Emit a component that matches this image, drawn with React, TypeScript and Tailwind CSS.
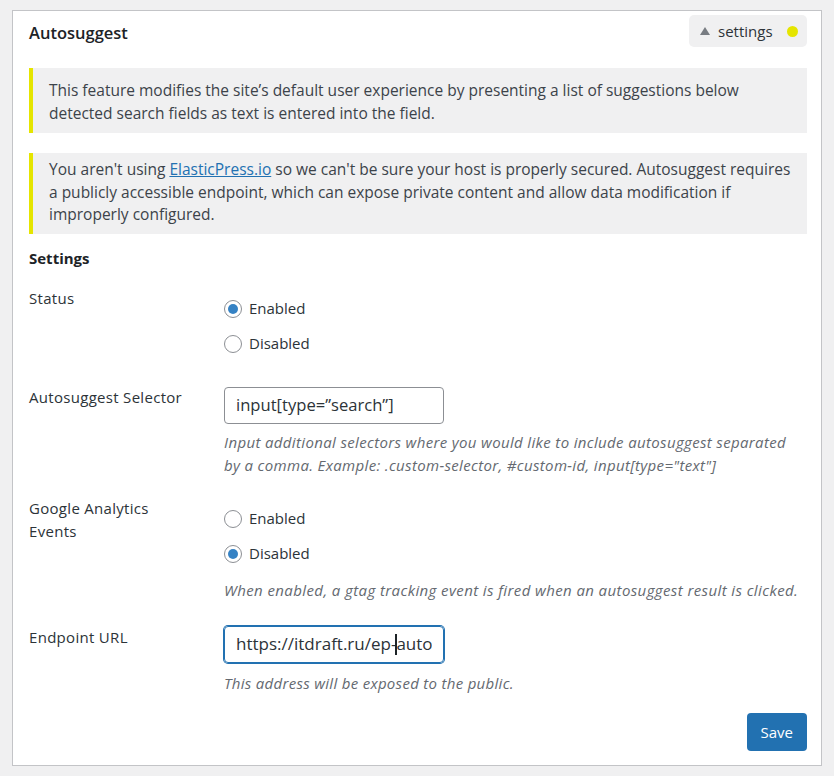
const font = '"Open Sans", "Noto Sans", sans-serif';

function Radio({ label, checked }: { label: string; checked?: boolean }) {
  return (
    <label className="flex items-center gap-[7px] h-[23px]">
      <span className="w-[18px] h-[18px] rounded-full border border-[#8c8f94] bg-white flex items-center justify-center">
        {checked && <span className="w-[10px] h-[10px] rounded-full bg-[#3582c4]"></span>}
      </span>
      <span className="text-[#2c3338]">{label}</span>
    </label>
  );
}

function Row({ label, children, className = '' }: { label: React.ReactNode; children: React.ReactNode; className?: string }) {
  return (
    <div className={`flex ${className}`}>
      <div className="w-[165px] mr-[30px] flex-shrink-0 text-[#2c3338] tracking-[0.3px]">{label}</div>
      <div className="flex-1 pr-[6px]">{children}</div>
    </div>
  );
}

export default function App() {
  return (
    <div
      className="min-h-screen bg-[#f0f0f1] pt-[10px] px-[12px] text-[15px] leading-[22.5px]"
      style={{ fontFamily: font }}
    >
      <div className="border border-[#c3c4c7] bg-white pt-[4px] pb-[14px] pl-4 pr-[14px]">
        {/* Header */}
        <div className="flex items-center justify-between h-[32px]">
          <h2 className="text-[16.5px] font-semibold text-[#1d2327] mt-[5px]">Autosuggest</h2>
          <button className="flex items-center h-[32px] w-[118px] pl-[11px] rounded-[5px] bg-[#f0f0f1] text-[#2c3338]">
            <svg width="10" height="8" viewBox="0 0 10 8" className="mr-[8px]">
              <path d="M5 0 L10 8 L0 8 Z" fill="#787c82" />
            </svg>
            <span className="text-[15px]">settings</span>
            <span className="ml-auto mr-[9px] w-[11px] h-[11px] rounded-full bg-[#e5e500]"></span>
          </button>
        </div>

        {/* Notices */}
        <div className="mt-[21px] bg-[#f0f0f1] border-l-4 border-[#e5e500] pl-4 pr-3 pt-[11px] pb-[9px] text-[#3c434a] text-[15.5px]">
          This feature modifies the site’s default user experience by presenting a list of suggestions below
          detected search fields as text is entered into the field.
        </div>
        <div className="mt-[20px] bg-[#f0f0f1] border-l-4 border-[#e5e500] pl-4 pr-3 pt-[5px] pb-[8px] text-[#3c434a] text-[15.5px]">
          You aren't using{' '}
          <a href="#" className="text-[#2271b1] underline">
            ElasticPress.io
          </a>{' '}
          so we can't be sure your host is properly secured. Autosuggest requires a publicly accessible endpoint,
          which can expose private content and allow data modification if improperly configured.
        </div>

        <h3 className="mt-[13px] font-bold text-[#1d2327] text-[15px]">Settings</h3>

        {/* Status */}
        <Row label="Status" className="mt-[18px]">
          <div className="pt-[10px] pb-[10px] flex flex-col gap-[12px]">
            <Radio label="Enabled" checked />
            <Radio label="Disabled" />
          </div>
        </Row>

        {/* Selector */}
        <Row label="Autosuggest Selector" className="mt-[21px]">
          <div className="mt-[1px] w-[220px] h-[37px] border border-[#8c8f94] rounded-[4px] px-[11px] flex items-center text-[16.6px] text-[#2c3338]">
            input[type=”search”]
          </div>
          <p className="mt-[7px] italic text-[#646970] tracking-[0.35px]">
            Input additional selectors where you would like to include autosuggest separated by a comma. Example:
            .custom-selector, #custom-id, input[type="text"]
          </p>
        </Row>

        {/* GA */}
        <Row label="Google Analytics Events" className="mt-[21px]">
          <div className="pt-[10px] pb-[10px] flex flex-col gap-[12px]">
            <Radio label="Enabled" />
            <Radio label="Disabled" checked />
          </div>
          <p className="mt-[4px] italic text-[#646970] tracking-[0.4px]">
            When enabled, a gtag tracking event is fired when an autosuggest result is clicked.
          </p>
        </Row>

        {/* Endpoint */}
        <Row label="Endpoint URL" className="mt-[24px]">
          <div className="w-[220px] h-[37px] border border-[#2271b1] shadow-[0_0_0_1px_#2271b1] rounded-[4px] px-[11px] flex items-center text-[17px] text-[#2c3338]">
            <div className="flex-1 overflow-hidden whitespace-nowrap flex items-center">
              <span>https://itdraft.ru/ep-</span>
              <span className="inline-block flex-shrink-0 w-[2px] h-[21px] bg-[#1d2327] -mx-[1px]"></span>
              <span>autosuggest</span>
            </div>
          </div>
          <p className="mt-[9px] italic text-[#646970] tracking-[0.3px]">This address will be exposed to the public.</p>
        </Row>

        <div className="flex justify-end mt-[19px]">
          <button className="h-[38px] px-[14px] rounded-[4px] bg-[#2271b1] text-white text-[15px]">Save</button>
        </div>
      </div>
    </div>
  );
}
